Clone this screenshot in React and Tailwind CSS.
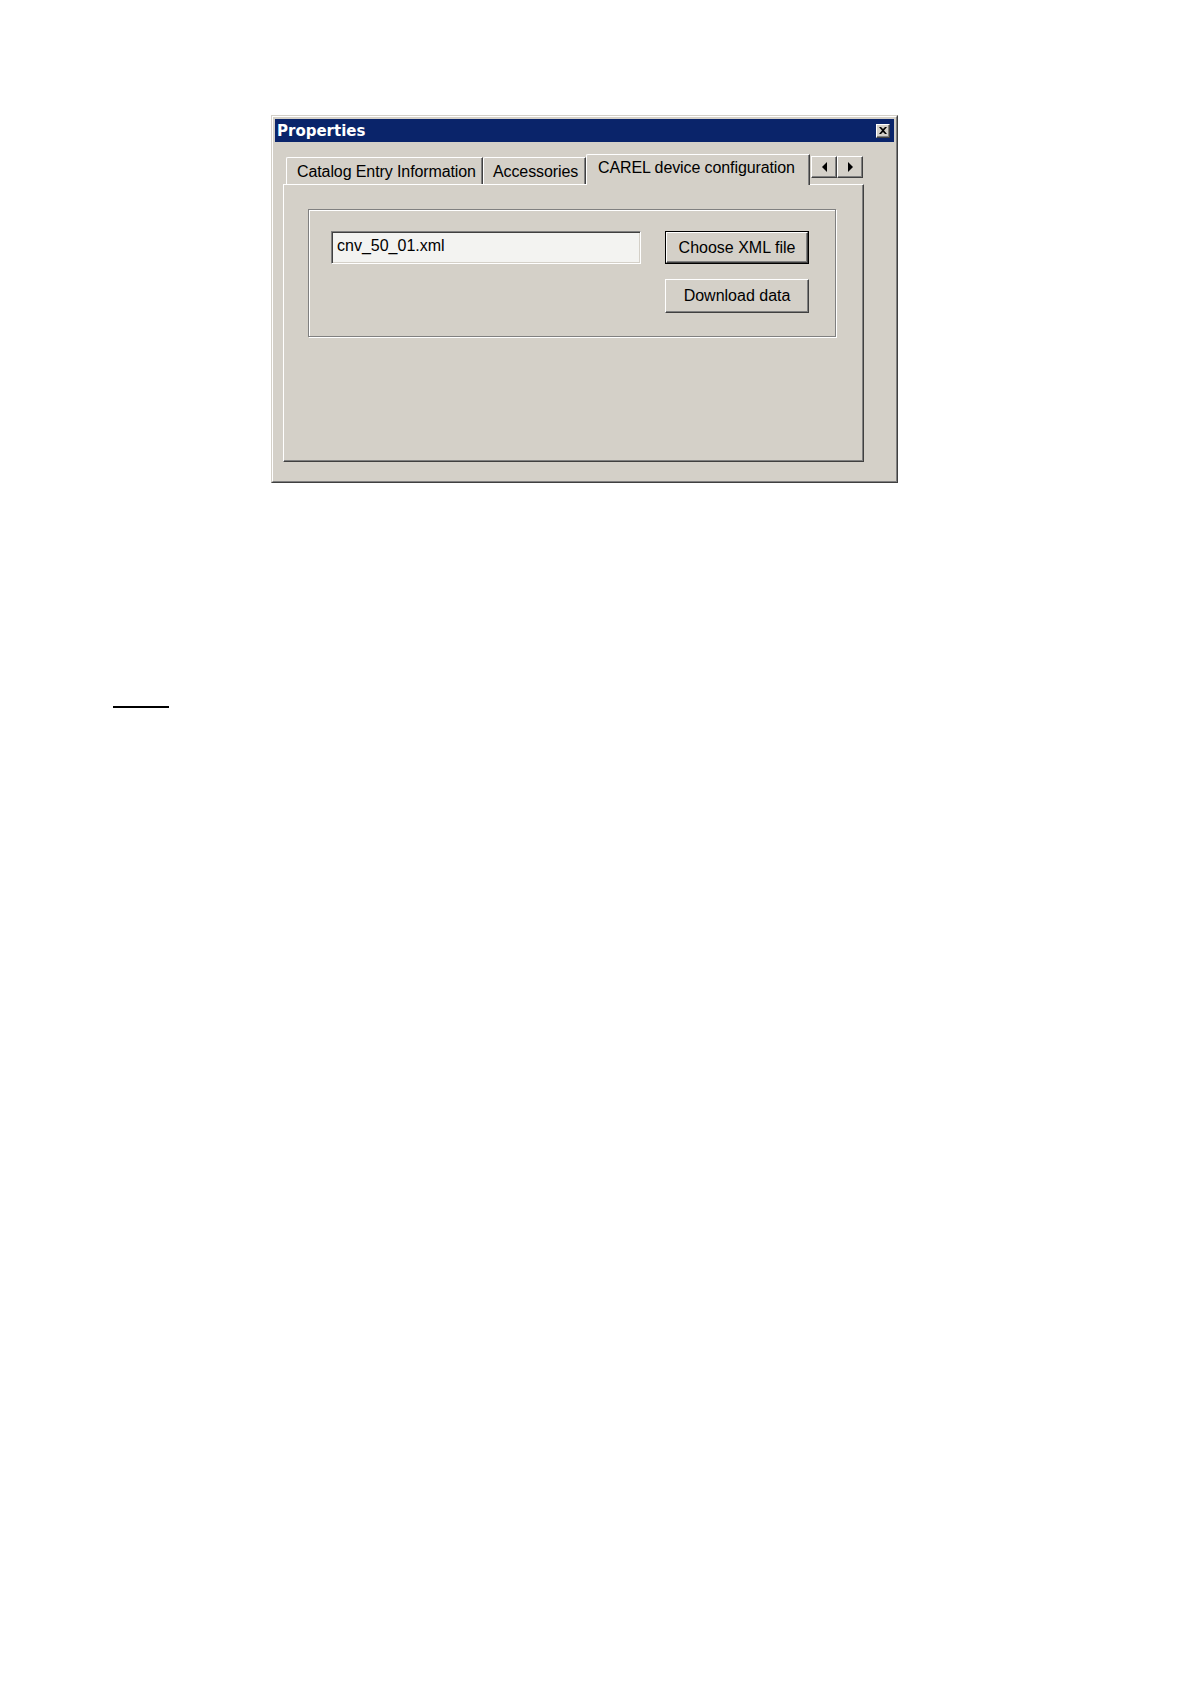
/**
 * App.jsx — classic Windows "Properties" dialog
 *
 * Tabbed property sheet with the CAREL device configuration page open.
 */

// ── Small raised 3D box (Win2000 bevel) ──────────────────────────────────────

function Raised({ className = '', children }) {
  return (
    <div
      className={`border border-t-white border-l-white border-b-[#404040] border-r-[#404040] bg-[#d4d0c8] shadow-[inset_-1px_-1px_0_#808080] ${className}`}
    >
      {children}
    </div>
  )
}

function CloseButton() {
  return (
    <Raised className="w-[14px] h-[14px] flex items-center justify-center">
      <svg width="8" height="7" viewBox="0 0 8 7" className="block">
        <path d="M0 0h2l2 2 2-2h2L5 3.5 8 7H6L4 5 2 7H0l3-3.5z" fill="#000" />
      </svg>
    </Raised>
  )
}

function ArrowButton({ dir }) {
  return (
    <Raised className="w-[26px] h-[22px] flex items-center justify-center">
      <svg width="5" height="10" viewBox="0 0 5 10" className="block">
        {dir === 'left'
          ? <polygon points="5,0 5,10 0,5" fill="#000" />
          : <polygon points="0,0 0,10 5,5" fill="#000" />}
      </svg>
    </Raised>
  )
}

// ── Tabs ─────────────────────────────────────────────────────────────────────

function Tab({ label, width, pad, active }) {
  if (active) {
    return (
      <div
        className={`${width} h-[31px] -mb-px relative z-10 bg-[#d4d0c8] border-t border-l border-r border-t-white border-l-white border-r-[#404040] shadow-[inset_-1px_0_0_#808080] rounded-tl-[2px] ${pad} pt-[5px] leading-[16px] tracking-[-0.1px] whitespace-nowrap`}
      >
        {label}
      </div>
    )
  }
  return (
    <div
      className={`${width} h-[27px] bg-[#d4d0c8] border-t border-l border-r border-t-white border-l-white border-r-[#404040] shadow-[inset_-1px_0_0_#808080] rounded-tl-[2px] ${pad} pt-[6px] leading-[16px] tracking-[-0.1px] whitespace-nowrap`}
    >
      {label}
    </div>
  )
}

// ── Main Component ───────────────────────────────────────────────────────────

export default function App() {
  return (
    <div className="min-h-[1684px] bg-white pt-[115px] text-[16px] text-black font-['Liberation_Sans',Arial,sans-serif]">

      {/* ── Dialog window ───────────────────────────────────────── */}
      <div className="ml-[271px] w-[627px] h-[368px] border border-t-[#d4d0c8] border-l-[#d4d0c8] border-b-[#404040] border-r-[#404040]">
        <div className="h-full flex flex-col bg-[#d4d0c8] border border-t-white border-l-white border-b-[#808080] border-r-[#808080] p-[2px]">

          {/* title bar */}
          <div className="h-[23px] shrink-0 flex items-center justify-between bg-[#0a246a] pl-[2px] pr-[4px]">
            <span className="text-white font-bold text-[15px] leading-none pt-[2px] font-['DejaVu_Sans',sans-serif]">
              Properties
            </span>
            <CloseButton />
          </div>

          {/* body */}
          <div className="pl-[8px] pt-[12px]">

            {/* tab strip */}
            <div className="flex items-end h-[30px]">
              <div className="ml-[3px]" />
              <Tab label="Catalog Entry Information" width="w-[197px]" pad="pl-[10px]" />
              <Tab label="Accessories" width="w-[103px]" pad="pl-[9px]" />
              <Tab label="CAREL device configuration" width="w-[224px]" pad="pl-[11px]" active />
              <div className="self-start mt-[2px] ml-px flex">
                <ArrowButton dir="left" />
                <ArrowButton dir="right" />
              </div>
            </div>

            {/* tab page */}
            <div className="w-[581px] h-[278px] border border-t-white border-l-white border-b-[#404040] border-r-[#404040] shadow-[inset_-1px_-1px_0_#808080] pl-[24px] pt-[24px]">

              {/* group box */}
              <div className="w-[528px] h-[128px] border border-[#808080] shadow-[inset_1px_1px_0_#fff,1px_1px_0_#fff] flex pl-[22px] pt-[21px]">

                {/* file name field */}
                <div className="w-[310px] h-[33px] border border-t-[#808080] border-l-[#808080] border-b-white border-r-white shadow-[inset_1px_1px_0_#404040,inset_-1px_-1px_0_#d4d0c8] bg-[#f3f3f1] pl-[5px] pt-[6px] leading-[16px]">
                  cnv_50_01.xml
                </div>

                {/* buttons */}
                <div className="ml-[24px] flex flex-col gap-[15px]">
                  <div className="w-[144px] h-[33px] border border-black">
                    <Raised className="h-full flex items-center justify-center leading-[16px]">
                      Choose XML file
                    </Raised>
                  </div>
                  <Raised className="w-[144px] h-[34px] flex items-center justify-center leading-[16px]">
                    Download data
                  </Raised>
                </div>
              </div>
            </div>
          </div>
        </div>
      </div>

      {/* ── Short rule below the figure ─────────────────────────── */}
      <div className="ml-[113px] mt-[223px] w-[56px] h-[2px] bg-black" />
    </div>
  )
}
